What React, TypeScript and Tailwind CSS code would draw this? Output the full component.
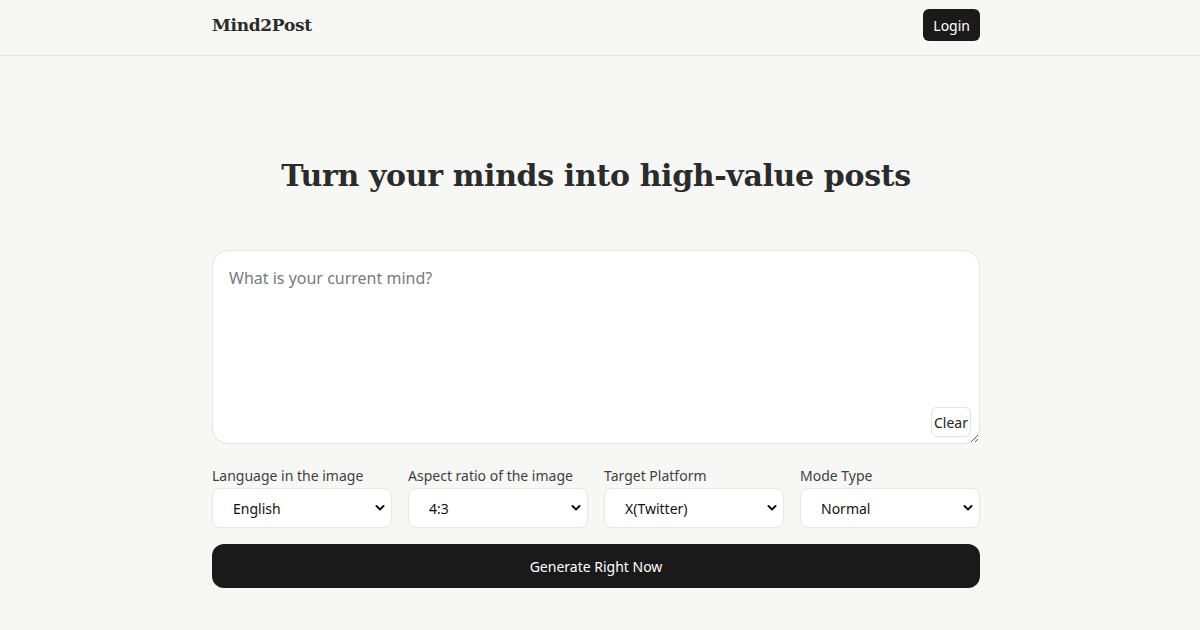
import React from "react";

const Chevron = () => (
  <svg className="pointer-events-none absolute right-[7px] top-1/2 -translate-y-1/2" width="10" height="7" viewBox="0 0 10 7" fill="none">
    <path d="M1.5 1.5 L5 5 L8.5 1.5" stroke="#111" strokeWidth="2" strokeLinecap="round" strokeLinejoin="round" />
  </svg>
);

function Field({ label, value }: { label: string; value: string }) {
  return (
    <div className="flex flex-col">
      <label className="text-[14px] leading-[20px] text-[#3f3f3f] mb-[2px]">{label}</label>
      <div className="relative">
        <select
          defaultValue={value}
          className="appearance-none w-full h-[40px] rounded-lg border border-[#e6e6e6] bg-white pl-[20px] pr-6 text-[14px] text-[#111] outline-none"
        >
          <option>{value}</option>
        </select>
        <Chevron />
      </div>
    </div>
  );
}

export default function App() {
  return (
    <div className="min-h-[630px] bg-[#f7f7f5] font-['Noto_Sans',sans-serif] text-[#222]">
      <header className="h-[56px] border-b border-[#e4e4e2]">
        <div className="w-[1192px]">
          <div className="mx-auto flex w-[768px] items-center justify-between pt-[9px]">
            <span className="font-['DejaVu_Serif',serif] text-[17px] font-bold text-[#2b2b2b] tracking-[-0.3px] translate-y-[1px]">Mind2Post</span>
            <button className="h-[32px] rounded-md bg-[#1a1a1a] px-[10px] text-[14px] text-white">Login</button>
          </div>
        </div>
      </header>
      <div className="w-[1192px]">
        <main className="mx-auto w-[768px] pt-[100px]">
          <h1 className="text-center font-['DejaVu_Serif',serif] text-[30px] font-bold text-[#2b2b2b] tracking-[-0.35px] leading-[40px]">
            Turn your minds into high-value posts
          </h1>
          <div className="relative mt-[54px]">
            <textarea
              placeholder="What is your current mind?"
              className="block h-[194px] w-full resize-y rounded-2xl border border-[#e4e4e2] bg-white px-4 py-[16px] text-[16px] leading-[22px] text-[#222] placeholder:text-[#7a7a7a] outline-none"
            />
            <button className="absolute right-[9px] bottom-[7px] h-[30px] rounded-md border border-[#e4e4e2] bg-white px-[2px] text-[14px] text-[#222]">
              Clear
            </button>
          </div>
          <div className="mt-[22px] grid grid-cols-4 gap-4">
            <Field label="Language in the image" value="English" />
            <Field label="Aspect ratio of the image" value="4:3" />
            <Field label="Target Platform" value="X(Twitter)" />
            <Field label="Mode Type" value="Normal" />
          </div>
          <button className="mt-4 h-[44px] w-full rounded-xl bg-[#1a1a1a] text-[14px] text-white">Generate Right Now</button>
        </main>
      </div>
    </div>
  );
}
